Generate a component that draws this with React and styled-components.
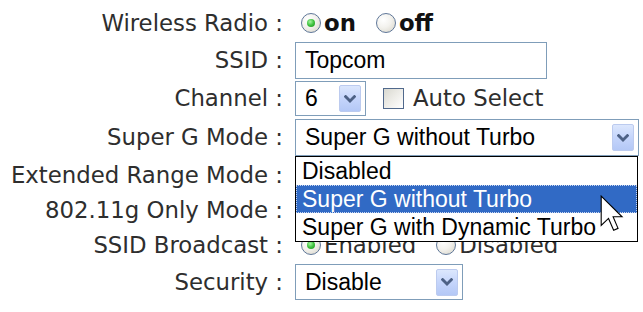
import React from "react";
import styled, { createGlobalStyle } from "styled-components";

const GlobalStyle = createGlobalStyle`
  html, body { margin: 0; padding: 0; background: #ffffff; }
  body { font-family: "DejaVu Sans", Verdana, sans-serif; }
`;

const Page = styled.div`
  position: relative;
  width: 643px;
  height: 312px;
  overflow: hidden;
  background: #ffffff;
`;

const Form = styled.div`
  display: grid;
  grid-template-columns: 283px 1fr;
  grid-template-rows: 36px 39px 37px 41px 35px 35px 35px 38px;
  column-gap: 12px;
  padding-top: 5px;
`;

const Label = styled.div`
  align-self: center;
  text-align: right;
  white-space: nowrap;
  font-family: "DejaVu Sans", Verdana, sans-serif;
  font-size: 22.8px;
  line-height: 1;
  color: #2e2e2e;
`;

const Field = styled.div`
  position: relative;
  display: flex;
  align-items: center;
  min-width: 0;
`;

const Option = styled.label`
  display: flex;
  align-items: center;
  & + & { margin-left: 14px; }
`;

const Radio = styled.span`
  flex: none;
  box-sizing: border-box;
  width: 20px;
  height: 20px;
  margin: 0 3px 0 6px;
  border-radius: 50%;
  border: 1.5px solid #5f7799;
  background: radial-gradient(circle at 35% 32%, #ffffff 0%, #f3f2ee 45%, #d6d3c6 100%);
  display: inline-flex;
  align-items: center;
  justify-content: center;
  &::after {
    content: "";
    display: ${(p) => (p.$checked ? "block" : "none")};
    width: 8px;
    height: 8px;
    border-radius: 50%;
    background: radial-gradient(circle at 40% 35%, #a6f5a0 0%, #3fc23f 50%, #1c8c1c 100%);
  }
`;

const OptionText = styled.span`
  font-family: "DejaVu Sans", Verdana, sans-serif;
  font-size: 22.8px;
  line-height: 1;
  font-weight: ${(p) => (p.$bold ? 700 : 400)};
  color: ${(p) => (p.$bold ? "#111" : "#2e2e2e")};
`;

const TextInput = styled.div`
  box-sizing: border-box;
  width: ${(p) => p.$w}px;
  height: ${(p) => p.$h}px;
  border: 1px solid #7f9db9;
  background: #ffffff;
  padding-left: 9px;
  display: flex;
  align-items: center;
  font-family: "Liberation Sans", Tahoma, Arial, sans-serif;
  font-size: 23px;
  color: #000;
`;

const SelectWrap = styled.div`
  position: relative;
`;

const SelectBox = styled.div`
  box-sizing: border-box;
  width: ${(p) => p.$w}px;
  height: ${(p) => p.$h}px;
  border: 1px solid #7f9db9;
  background: #ffffff;
  padding-left: 9px;
  display: flex;
  align-items: center;
  font-family: "Liberation Sans", Tahoma, Arial, sans-serif;
  font-size: 23px;
  color: #000;
  white-space: nowrap;
`;

const ArrowButton = styled.span`
  box-sizing: border-box;
  margin-left: auto;
  margin-right: 4px;
  width: 22px;
  height: 27px;
  border: 1px solid #bccbef;
  border-radius: 2px;
  background: linear-gradient(180deg, #dce7fd 0%, #c5d5fb 50%, #b4c8f6 100%);
  display: flex;
  align-items: center;
  justify-content: center;
  flex: none;
`;

const Chevron = () => (
  <svg width="12" height="8" viewBox="0 0 12 8">
    <path d="M1.6 1.6 L6 6 L10.4 1.6" fill="none" stroke="#4d6185" strokeWidth="2.8" strokeLinecap="square" />
  </svg>
);

const Checkbox = styled.span`
  flex: none;
  box-sizing: border-box;
  width: 21px;
  height: 21px;
  margin: 0 9px 0 17px;
  border: 1px solid #51698c;
  background: linear-gradient(135deg, #d8d8d0 0%, #ecebe6 45%, #ffffff 100%);
`;

const List = styled.div`
  position: absolute;
  top: 100%;
  left: 0;
  right: 1px;
  z-index: 2;
  box-sizing: border-box;
  border: 1px solid #000;
  border-top: none;
  background: #ffffff;
`;

const ListItem = styled.div`
  height: 28px;
  padding-left: 6px;
  display: flex;
  align-items: center;
  font-family: "Liberation Sans", Tahoma, Arial, sans-serif;
  font-size: 23px;
  white-space: nowrap;
  color: ${(p) => (p.$active ? "#ffffff" : "#000000")};
  background: ${(p) => (p.$active ? "#316ac5" : "#ffffff")};
  outline: ${(p) => (p.$active ? "1px dotted #c8d6f0" : "none")};
  outline-offset: -1px;
`;

const ListTopBorder = styled.div`
  border-top: 1px solid #000;
`;

const Cursor = styled.svg`
  position: absolute;
  left: 600px;
  top: 195px;
  z-index: 5;
`;

const Select = ({ w, h, value, children }) => (
  <SelectWrap>
    <SelectBox $w={w} $h={h}>
      {value}
      <ArrowButton>
        <Chevron />
      </ArrowButton>
    </SelectBox>
    {children}
  </SelectWrap>
);

const RadioPair = ({ first, second, checkedFirst = true, bold = false }) => (
  <>
    <Option>
      <Radio $checked={checkedFirst} />
      <OptionText $bold={bold}>{first}</OptionText>
    </Option>
    <Option>
      <Radio $checked={!checkedFirst} />
      <OptionText $bold={bold}>{second}</OptionText>
    </Option>
  </>
);

export default function App() {
  return (
    <Page>
      <GlobalStyle />
      <Form>
        <Label>Wireless Radio :</Label>
        <Field>
          <RadioPair first="on" second="off" bold />
        </Field>

        <Label>SSID :</Label>
        <Field>
          <TextInput $w={252} $h={37}>Topcom</TextInput>
        </Field>

        <Label>Channel :</Label>
        <Field>
          <Select w={71} h={35} value="6" />
          <Checkbox />
          <OptionText>Auto Select</OptionText>
        </Field>

        <Label>Super G Mode :</Label>
        <Field>
          <Select w={344} h={37} value="Super G without Turbo">
            <List>
              <ListTopBorder />
              <ListItem>Disabled</ListItem>
              <ListItem $active>Super G without Turbo</ListItem>
              <ListItem>Super G with Dynamic Turbo</ListItem>
            </List>
          </Select>
        </Field>

        <Label>Extended Range Mode :</Label>
        <Field />

        <Label>802.11g Only Mode :</Label>
        <Field />

        <Label>SSID Broadcast :</Label>
        <Field>
          <RadioPair first="Enabled" second="Disabled" />
        </Field>

        <Label>Security :</Label>
        <Field>
          <Select w={168} h={36} value="Disable" />
        </Field>
      </Form>

      <Cursor width="24" height="37" viewBox="-0.6 -0.6 13 20.2">
        <path
          d="M0 0 L0 16 L4 12.2 L6.8 18.6 L9.2 17.6 L6.5 11.3 L11.4 11.3 Z"
          fill="#ffffff"
          stroke="#000000"
          strokeWidth="0.6"
          strokeLinejoin="miter"
        />
      </Cursor>
    </Page>
  );
}
